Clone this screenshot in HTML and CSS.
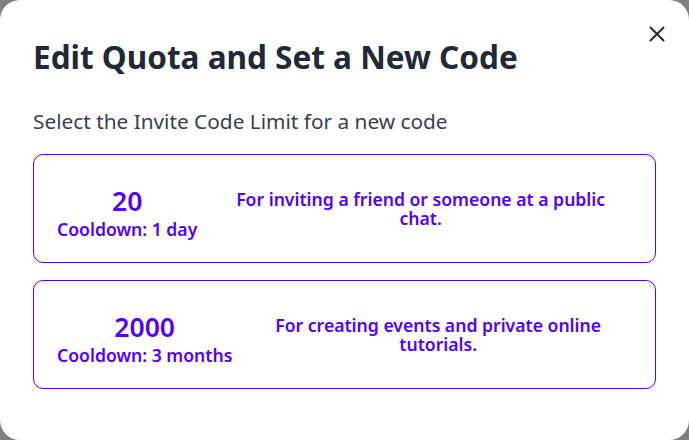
FILE: index.html
```html
<!DOCTYPE html>
<html lang="en">
<head>
<meta charset="utf-8">
<title>Edit Quota</title>
<link rel="stylesheet" href="styles.css">
</head>
<body>
<div class="modal">
  <button class="close" aria-label="Close">
    <svg width="16" height="16" viewBox="0 0 16 16" fill="none" stroke="#1f2937" stroke-width="2" stroke-linecap="round"><path d="M1.5 1.5L14.5 14.5M14.5 1.5L1.5 14.5"/></svg>
  </button>
  <h1 class="title">Edit Quota and Set a New Code</h1>
  <p class="subtitle">Select the Invite Code Limit for a new code</p>
  <div class="options">
    <div class="option">
      <div class="limit">
        <div class="number">20</div>
        <div class="cooldown">Cooldown: 1 day</div>
      </div>
      <div class="desc">For inviting a friend or someone at a public chat.</div>
    </div>
    <div class="option">
      <div class="limit">
        <div class="number">2000</div>
        <div class="cooldown">Cooldown: 3 months</div>
      </div>
      <div class="desc">For creating events and private online tutorials.</div>
    </div>
  </div>
</div>
</body>
</html>
```
FILE: styles.css
```css
* { box-sizing: border-box; }
html, body { margin: 0; padding: 0; }
body {
  background: #808080;
  font-family: "Noto Sans", "Open Sans", sans-serif;
  width: 689px;
  height: 440px;
  overflow: hidden;
}
.modal {
  position: relative;
  width: 689px;
  height: 440px;
  background: #fff;
  border-radius: 20px;
  padding: 36px 33px 0 33px;
}
.close {
  position: absolute;
  top: 26px;
  right: 24px;
  width: 16px;
  height: 16px;
  padding: 0;
  border: 0;
  background: none;
  display: flex;
}
.title {
  margin: 0;
  font-size: 31.5px;
  line-height: 42px;
  font-weight: 700;
  color: #1f2937;
  letter-spacing: 0;
}
.subtitle {
  margin: 29px 0 0 0;
  font-size: 20.8px;
  line-height: 28px;
  color: #374151;
}
.options {
  margin-top: 19px;
  display: flex;
  flex-direction: column;
  gap: 17px;
}
.option {
  height: 109px;
  border: 1px solid #5200ff;
  border-radius: 10px;
  display: flex;
  align-items: center;
  padding: 0 24px 0 23px;
  gap: 13px;
  color: #5200ff;
}
.limit {
  display: flex;
  flex-direction: column;
  align-items: center;
  padding-top: 6px;
}
.number {
  font-size: 26.5px;
  line-height: 34px;
  font-weight: 600;
}
.cooldown {
  font-size: 17.6px;
  line-height: 22px;
  font-weight: 600;
}
.desc {
  flex: 1;
  text-align: center;
  font-size: 17.6px;
  line-height: 19px;
  font-weight: 600;
  padding: 0 8px;
}
```
